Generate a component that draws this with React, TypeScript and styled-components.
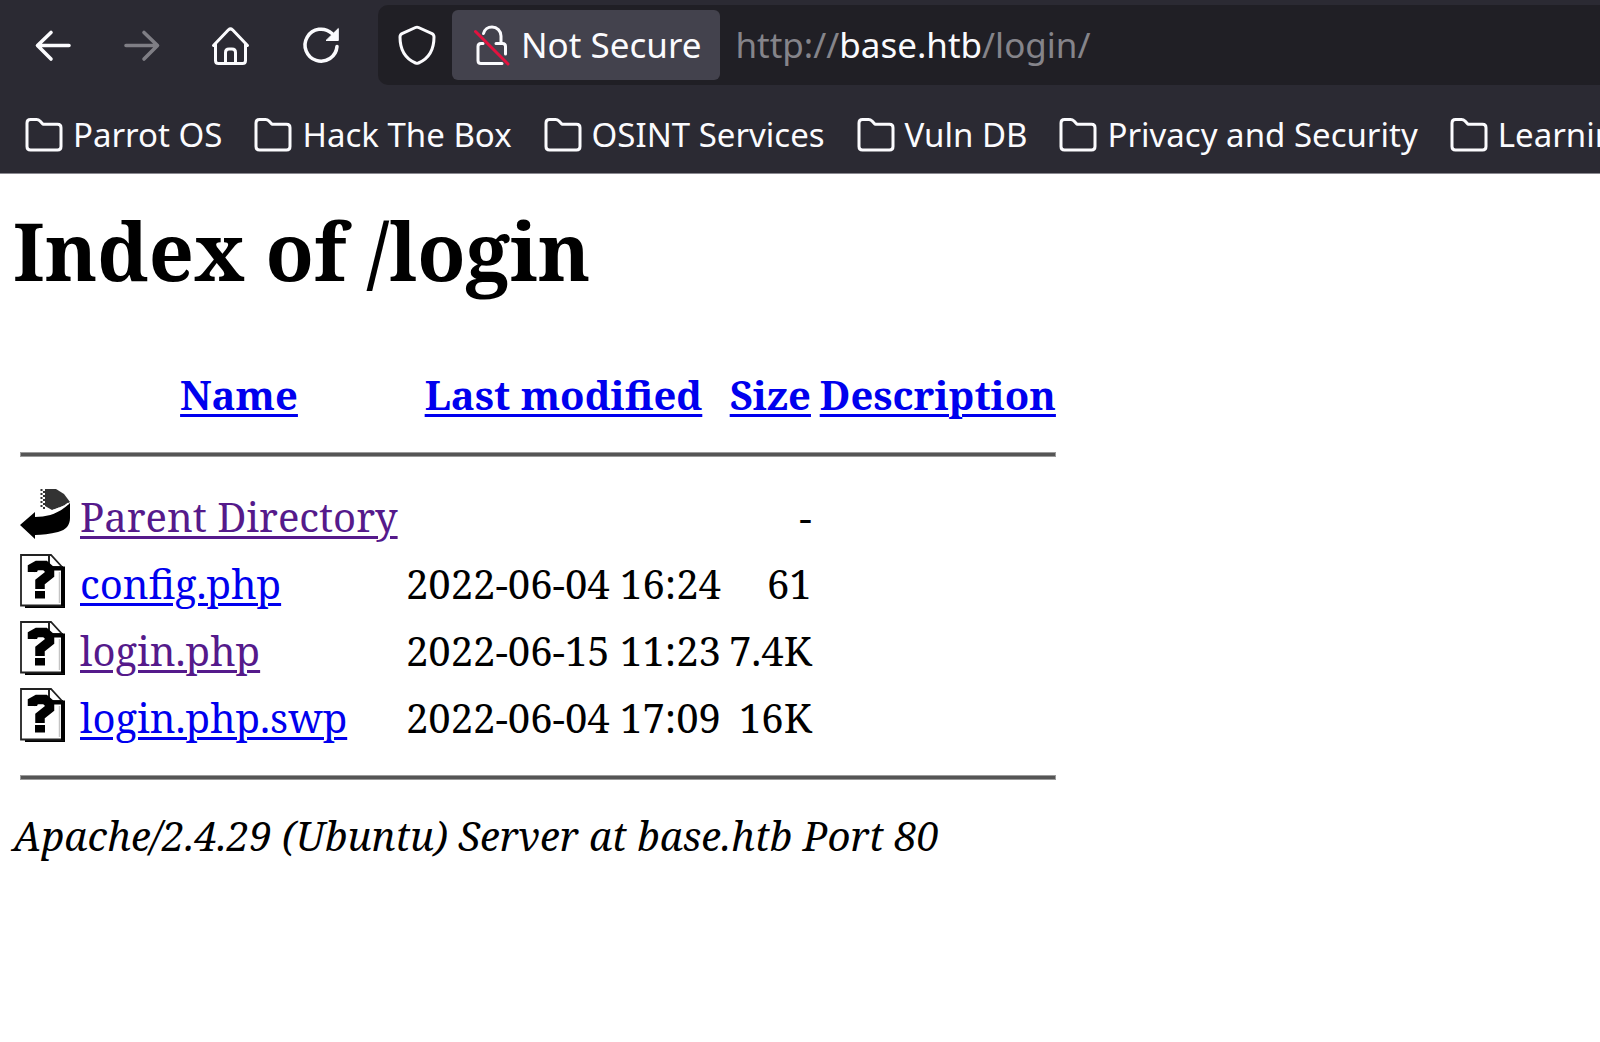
import React from "react";
import styled, { createGlobalStyle } from "styled-components";

const GlobalStyle = createGlobalStyle`
  *, *::before, *::after { box-sizing: border-box; }
  body { margin: 0; background: #ffffff; overflow-x: hidden; }
`;

const uiFont = '"Noto Sans", "Open Sans", sans-serif';
const pageFont = '"Noto Serif", "DejaVu Serif", serif';

const Chrome = styled.header`
  background: #2b2a33;
  color: #fbfbfe;
  font-family: ${uiFont};
  border-bottom: 1px solid #8a8990;
  overflow: hidden;
`;

const NavRow = styled.nav`
  display: flex;
  align-items: center;
  padding: 5px 0 0 8px;
`;

const NavButton = styled.button`
  display: flex;
  flex: none;
  align-items: center;
  justify-content: center;
  width: 89px;
  height: 80px;
  padding: 0;
  border: 0;
  background: none;
  color: #fbfbfe;
  &:disabled { color: #7f7e85; }
`;

const UrlBar = styled.div`
  display: flex;
  flex: 1;
  align-items: center;
  height: 80px;
  margin-left: 14px;
  background: #201f25;
  border-radius: 10px 0 0 10px;
`;

const ShieldButton = styled(NavButton)`
  width: 74px;
  padding-left: 4px;
`;

const SecurityChip = styled.button`
  display: flex;
  flex: none;
  align-items: center;
  gap: 11px;
  height: 70px;
  padding: 0 19px 0 22px;
  border: 0;
  border-radius: 6px;
  background: #43424d;
  color: #fbfbfe;
  font-family: inherit;
  font-size: 35px;
  line-height: 48px;
`;

const Address = styled.div`
  flex: 1;
  padding-left: 15px;
  color: #85848a;
  font-size: 35px;
  line-height: 48px;
  white-space: nowrap;
  outline: none;
`;

const Host = styled.span`
  color: #fbfbfe;
`;

const BookmarkRow = styled.nav`
  display: flex;
  align-items: center;
  gap: 32px;
  height: 88px;
  padding: 12px 0 0 25px;
`;

const BookmarkButton = styled.button`
  display: flex;
  flex: none;
  align-items: center;
  gap: 10px;
  padding: 0;
  border: 0;
  background: none;
  color: #fbfbfe;
  font-family: inherit;
  font-size: 33px;
  line-height: 44px;
  white-space: nowrap;
`;

const Icon = styled.svg`
  display: block;
  flex: none;
  overflow: visible;
`;

const Page = styled.main`
  padding: 23px 13px 48px;
  color: #000000;
  font-family: ${pageFont};
  font-size: 40px;
  line-height: 54px;
`;

const Title = styled.h1`
  margin: 0 0 56px;
  font-size: 79px;
  line-height: 108px;
`;

const Listing = styled.table`
  margin: 0 0 2px 1px;
  border-spacing: 5px;
  border-collapse: separate;
  white-space: nowrap;
`;

const HeadCell = styled.th<{ $width: number }>`
  min-width: ${(p) => p.$width}px;
  padding: 2px 2px 2px 1px;
  text-align: center;
`;

const IconCell = styled.td`
  padding: 2px 2px 2px 1px;
  height: 62px;
`;

const Cell = styled.td<{ $right?: boolean }>`
  padding: 4px 2px 0 1px;
  text-align: ${(p) => (p.$right ? "right" : "left")};
`;

const RuleCell = styled.th`
  height: 50px;
  padding: 2px 2px 2px 1px;
`;

const Rule = styled.hr`
  height: 5px;
  margin: 0;
  border: 1px solid #9a9a9a;
  background: #555555;
`;

const Link = styled.a<{ $visited?: boolean }>`
  color: ${(p) => (p.$visited ? "#551a8b" : "#0000ee")};
  text-decoration: underline;
  text-decoration-thickness: 3px;
  text-underline-offset: 4px;
`;

const ServerLine = styled.address`
  font-style: italic;
`;

const BackIcon = ({ flip = false }: { flip?: boolean }) => (
  <Icon width="40" height="40" viewBox="0 0 40 40" fill="none" stroke="currentColor" strokeWidth="3.600" strokeLinecap="round" strokeLinejoin="round" aria-hidden="true">
    <g transform={flip ? "translate(40 0) scale(-1 1)" : undefined}>
      <path d="M36 20.500H5M18 7.500L4.500 20.500L18 34" />
    </g>
  </Icon>
);

const HomeIcon = () => (
  <Icon width="40" height="40" viewBox="0 0 40 40" fill="none" stroke="currentColor" strokeWidth="3" strokeLinecap="round" strokeLinejoin="round" aria-hidden="true">
    <path d="M2.500 20.500L17.500 4.800Q19.500 3 21.500 4.800L36.500 20.500" />
    <path d="M4.500 19V35.500Q4.500 38.500 7.500 38.500H31.500Q34.500 38.500 34.500 35.500V19" />
    <path d="M14.500 38V27.500Q14.500 24 18 24H21Q24.500 24 24.500 27.500V38" />
  </Icon>
);

const ReloadIcon = () => (
  <Icon width="40" height="40" viewBox="0 0 40 40" aria-hidden="true">
    <path d="M37 21.500A16 16 0 1 1 32 8.500" fill="none" stroke="currentColor" strokeWidth="3.500" strokeLinecap="round" />
    <path d="M38.300 3.500V15.500H26Z" fill="currentColor" stroke="currentColor" strokeWidth="1" strokeLinejoin="round" />
  </Icon>
);

const ShieldIcon = () => (
  <Icon width="40" height="40" viewBox="0 0 40 40" fill="none" stroke="currentColor" strokeWidth="3" strokeLinejoin="round" aria-hidden="true">
    <path d="M18.500 2.500Q20 1.800 21.500 2.500L35 8.600Q37 9.600 37 12C37 24 32 33.500 21.500 38Q20 38.700 18.500 38C8 33.500 3 24 3 12Q3 9.600 5 8.600Z" />
  </Icon>
);

const BrokenLockIcon = () => (
  <Icon width="36" height="40" viewBox="0 0 36 40" fill="none" strokeLinecap="round" aria-hidden="true">
    <g stroke="#fbfbfe" strokeWidth="3">
      <path d="M9.500 8.500C10.500 4.500 14 2 18 2C23 2 27 6 27 11V18" />
      <path d="M9 18.500H7Q4 18.500 4 21.500V35.500Q4 38.500 7 38.500H28" />
      <path d="M22 18.500H28.500Q31.500 18.500 31.500 21.500V29" />
    </g>
    <path d="M1.500 6.500L34 39" stroke="#e3123f" strokeWidth="3" />
  </Icon>
);

const FolderIcon = () => (
  <Icon width="38" height="36" viewBox="0 0 38 36" fill="none" stroke="currentColor" strokeWidth="3" strokeLinejoin="round" aria-hidden="true">
    <path d="M2 6Q2 2.500 5.500 2.500H11.500Q13.500 2.500 15 4L18 7.300H32.500Q36 7.300 36 10.800V29.500Q36 33 32.500 33H5.500Q2 33 2 29.500Z" />
  </Icon>
);

const ParentIcon = () => (
  <Icon width="52" height="56" viewBox="0 0 52 56" role="img" aria-label="[PARENTDIR]">
    <path d="M25 2H36L44 7L50 15L43 19L32 23L25 19Z" fill="#333333" />
    <path d="M21.500 2V20" stroke="#333333" strokeWidth="2" strokeDasharray="2 2" />
    <path d="M24 4V22" stroke="#333333" strokeWidth="2" strokeDasharray="2 2" />
    <path d="M0 38L15 25V30C28 30 40 26 50 16V31C50 38 46 43 38 45C30 47 22 48 15 48V52Z" fill="#000000" />
    <path d="M32 24L43 20L49 16" fill="none" stroke="#ffffff" strokeWidth="1.600" strokeDasharray="3 2" />
  </Icon>
);

const UnknownIcon = () => (
  <Icon width="52" height="56" viewBox="0 0 52 56" role="img" aria-label="[   ]">
    <path d="M5 51H42V13H45V54H5Z" fill="#000000" />
    <path d="M1 1H31L43 14V51.500H1Z" fill="#ffffff" stroke="#222222" strokeWidth="1.800" />
    <path d="M42.500 15V52" stroke="#000000" strokeWidth="3" />
    <path d="M39.500 18V49" stroke="#c4c4c4" strokeWidth="1.500" />
    <path d="M29 1V13H43" fill="none" stroke="#222222" strokeWidth="2" />
    <path d="M30 14.500H45" stroke="#000000" strokeWidth="4" />
    <path d="M12.500 18V14L17 11.500H25L29.500 15.500V20.500L20 28V35" fill="none" stroke="#000000" strokeWidth="9.500" />
    <path d="M15 37H25V44.500H15Z" fill="#000000" />
  </Icon>
);

const bookmarks = ["Parrot OS", "Hack The Box", "OSINT Services", "Vuln DB", "Privacy and Security", "Learning Resources"];

const columns = [
  { label: "Name", width: 321 },
  { label: "Last modified", width: 316 },
  { label: "Size", width: 84 },
  { label: "Description", width: 238 },
];

const files = [
  { name: "Parent Directory", date: "", size: "-", visited: true, parent: true },
  { name: "config.php", date: "2022-06-04 16:24", size: "61" },
  { name: "login.php", date: "2022-06-15 11:23", size: "7.4K", visited: true },
  { name: "login.php.swp", date: "2022-06-04 17:09", size: "16K" },
];

const RuleRow = () => (
  <tr>
    <RuleCell colSpan={5}>
      <Rule />
    </RuleCell>
  </tr>
);

export default function App() {
  return (
    <>
      <GlobalStyle />
      <Chrome>
        <NavRow aria-label="Navigation">
          <NavButton type="button" aria-label="Back"><BackIcon /></NavButton>
          <NavButton type="button" aria-label="Forward" disabled><BackIcon flip /></NavButton>
          <NavButton type="button" aria-label="Home"><HomeIcon /></NavButton>
          <NavButton type="button" aria-label="Reload"><ReloadIcon /></NavButton>
          <UrlBar>
            <ShieldButton type="button" aria-label="Tracking protection"><ShieldIcon /></ShieldButton>
            <SecurityChip type="button">
              <BrokenLockIcon />
              Not Secure
            </SecurityChip>
            <Address role="textbox" aria-label="Address" tabIndex={0}>
              http://<Host>base.htb</Host>/login/
            </Address>
          </UrlBar>
        </NavRow>
        <BookmarkRow aria-label="Bookmarks">
          {bookmarks.map((name) => (
            <BookmarkButton type="button" key={name}>
              <FolderIcon />
              {name}
            </BookmarkButton>
          ))}
        </BookmarkRow>
      </Chrome>
      <Page>
        <Title>Index of /login</Title>
        <Listing>
          <thead>
            <tr>
              <HeadCell $width={55} />
              {columns.map((c) => (
                <HeadCell key={c.label} $width={c.width} scope="col">
                  <Link href="#">{c.label}</Link>
                </HeadCell>
              ))}
            </tr>
          </thead>
          <tbody>
            <RuleRow />
            {files.map((f) => (
              <tr key={f.name}>
                <IconCell>{f.parent ? <ParentIcon /> : <UnknownIcon />}</IconCell>
                <Cell><Link href="#" $visited={f.visited}>{f.name}</Link></Cell>
                <Cell $right>{f.date}</Cell>
                <Cell $right>{f.size}</Cell>
                <Cell />
              </tr>
            ))}
            <RuleRow />
          </tbody>
        </Listing>
        <ServerLine>Apache/2.4.29 (Ubuntu) Server at base.htb Port 80</ServerLine>
      </Page>
    </>
  );
}
